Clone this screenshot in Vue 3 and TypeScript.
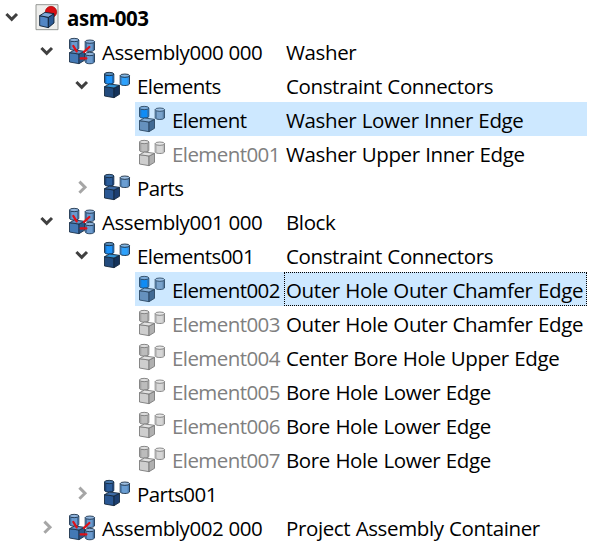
<script setup lang="ts">
type Kind = 'document' | 'assembly' | 'elements' | 'parts' | 'element' | 'hidden'

interface Row {
  level: number
  kind: Kind
  name: string
  label?: string
  arrow?: 'open' | 'closed'
  selected?: boolean
  focused?: boolean
}

const rows: Row[] = [
  { level: 0, kind: 'document', name: 'asm-003', arrow: 'open' },
  { level: 1, kind: 'assembly', name: 'Assembly000 000', label: 'Washer', arrow: 'open' },
  { level: 2, kind: 'elements', name: 'Elements', label: 'Constraint Connectors', arrow: 'open' },
  { level: 3, kind: 'element', name: 'Element', label: 'Washer Lower Inner Edge', selected: true },
  { level: 3, kind: 'hidden', name: 'Element001', label: 'Washer Upper Inner Edge' },
  { level: 2, kind: 'parts', name: 'Parts', arrow: 'closed' },
  { level: 1, kind: 'assembly', name: 'Assembly001 000', label: 'Block', arrow: 'open' },
  { level: 2, kind: 'elements', name: 'Elements001', label: 'Constraint Connectors', arrow: 'open' },
  { level: 3, kind: 'element', name: 'Element002', label: 'Outer Hole Outer Chamfer Edge', selected: true, focused: true },
  { level: 3, kind: 'hidden', name: 'Element003', label: 'Outer Hole Outer Chamfer Edge' },
  { level: 3, kind: 'hidden', name: 'Element004', label: 'Center Bore Hole Upper Edge' },
  { level: 3, kind: 'hidden', name: 'Element005', label: 'Bore Hole Lower Edge' },
  { level: 3, kind: 'hidden', name: 'Element006', label: 'Bore Hole Lower Edge' },
  { level: 3, kind: 'hidden', name: 'Element007', label: 'Bore Hole Lower Edge' },
  { level: 2, kind: 'parts', name: 'Parts001', arrow: 'closed' },
  { level: 1, kind: 'assembly', name: 'Assembly002 000', label: 'Project Assembly Container', arrow: 'closed' },
]

interface Palette { line: string; side: string; edge: string; top: string; cube: string; cubeSide: string; cubeTop: string; left: string; leftEdge: string; leftTop: string }

const palettes: Record<Kind, Palette> = {
  document: { line: '#0b1c30', side: '#5d90c8', edge: '#3465a4', top: '#8fb6df', cube: '#5286c4', cubeSide: '#2c5a94', cubeTop: '#7ea9d8', left: '#5d90c8', leftEdge: '#3465a4', leftTop: '#8fb6df' },
  assembly: { line: '#1a2f48', side: '#6b9ace', edge: '#4470a0', top: '#8fb3dc', cube: '#4379b5', cubeSide: '#2b578a', cubeTop: '#5f8fc4', left: '#6b9ace', leftEdge: '#4470a0', leftTop: '#8fb3dc' },
  elements: { line: '#14263a', side: '#2ea2fc', edge: '#3f87cc', top: '#7fb4e2', cube: '#234b7d', cubeSide: '#15335a', cubeTop: '#3294d8', left: '#1c93fb', leftEdge: '#1d69b5', leftTop: '#5588b5' },
  parts: { line: '#14263a', side: '#6b9ed2', edge: '#4f81b4', top: '#9dbfe3', cube: '#2a5793', cubeSide: '#1c3e70', cubeTop: '#3d6ba6', left: '#2b5d9b', leftEdge: '#1d4174', leftTop: '#4475ab' },
  element: { line: '#28445f', side: '#7aa3cc', edge: '#587fa6', top: '#9cc0e4', cube: '#6591bd', cubeSide: '#416a94', cubeTop: '#87afd6', left: '#108cf5', leftEdge: '#2a78c0', leftTop: '#78aada' },
  hidden: { line: '#777777', side: '#d6d6d6', edge: '#bdbdbd', top: '#e7e7e7', cube: '#cecece', cubeSide: '#b0b0b0', cubeTop: '#e2e2e2', left: '#bcbcbc', leftEdge: '#a3a3a3', leftTop: '#dcdcdc' },
}
</script>

<template>
  <main class="tree" role="tree">
    <div v-for="row in rows" :key="row.name" class="row" :class="['level-' + row.level, row.kind, { selected: row.selected }]" role="treeitem">
      <div class="gutter">
        <svg v-if="row.arrow" class="arrow" :class="row.arrow" viewBox="0 0 16 16">
          <path :d="row.arrow === 'open' ? 'M2.4 5 L7.7 10.300 L13 5' : 'M5.4 2.6 L11 8.200 L5.4 13.800'" />
        </svg>
      </div>
      <div class="item">
        <svg class="icon" viewBox="0 0 84 84" :stroke="palettes[row.kind].line" stroke-width="2.6" stroke-linejoin="round">
          <template v-if="row.kind === 'document'">
            <rect x="9" y="5" width="66" height="75" fill="#eeeeec" stroke="#888a85" />
            <circle cx="54" cy="27" r="17" fill="#d80e13" stroke="#a40000" stroke-width="2" />
            <path d="M20 38 L46 43 V74 L20 68Z" :fill="palettes.document.cube" />
            <path d="M46 43 L63 32 V60 L46 74Z" :fill="palettes.document.cubeSide" />
            <path d="M20 38 L36 28 L63 32 L46 43Z" :fill="palettes.document.cubeTop" />
          </template>
          <template v-else>
            <path d="M4.500 9 V35 C8 41 29 41 32.500 35 V9Z" :fill="palettes[row.kind].left" />
            <path d="M8 13 V36 M29 13 V36" :stroke="palettes[row.kind].leftEdge" stroke-width="4" />
            <ellipse cx="18.500" cy="9" rx="14" ry="5" :fill="palettes[row.kind].leftTop" />
            <path d="M51.500 14 V39 C55 45 76 45 79.500 39 V14Z" :fill="palettes[row.kind].side" />
            <path d="M55 18 V40 M76 18 V40" :stroke="palettes[row.kind].edge" stroke-width="4" />
            <ellipse cx="65.500" cy="14" rx="14" ry="5" :fill="palettes[row.kind].top" />
            <path d="M4.500 47 L33 51 V80 L4.500 75Z" :fill="palettes[row.kind].cube" />
            <path d="M33 51 L49.500 43 V70 L33 80Z" :fill="palettes[row.kind].cubeSide" />
            <path d="M4.500 47 L20 39 L49.500 43 L33 51Z" :fill="palettes[row.kind].cubeTop" />
            <template v-if="row.kind === 'assembly'">
              <path d="M51.500 51 V75 C55 82 76 82 79.500 75 V51Z" :fill="palettes.assembly.side" />
              <path d="M55 55 V77 M76 55 V77" :stroke="palettes.assembly.edge" stroke-width="4" />
              <ellipse cx="65.500" cy="51" rx="14" ry="5" :fill="palettes.assembly.top" />
              <path d="M16 27 L26 43 M64 30 L48 45 M38 64 H55" fill="none" stroke="#df1118" stroke-width="7" stroke-linecap="round" />
            </template>
          </template>
        </svg>
        <span class="name">{{ row.name }}</span>
      </div>
      <div v-if="row.label" class="label" :class="{ focused: row.focused }">{{ row.label }}</div>
    </div>
  </main>
</template>

<style>
body {
  background: #fff;
}
</style>

<style scoped>
.tree {
  width: 592px;
  height: 558px;
  overflow: hidden;
  background: #fff;
  color: #000;
  font-family: "Open Sans", "Noto Sans", sans-serif;
  font-size: 20.5px;
  line-height: 34px;
  letter-spacing: -0.38px;
  word-spacing: 0.5px;
  white-space: nowrap;
}
.row {
  display: grid;
  grid-template-columns: 30px 254px 303px;
  height: 34px;
}
.level-1 { grid-template-columns: 65px 219px 303px; }
.level-2 { grid-template-columns: 100px 184px 303px; }
.level-3 { grid-template-columns: 135px 149px 303px; }
.gutter {
  display: flex;
  align-items: center;
  justify-content: flex-end;
  padding-right: 10px;
}
.arrow {
  width: 16px;
  height: 16px;
  fill: none;
  stroke: #404040;
  stroke-width: 3;
}
.arrow.closed { stroke: #a6a6a6; }
.item {
  display: flex;
  align-items: center;
  gap: 6px;
  padding-left: 3px;
  min-width: 0;
}
.icon {
  flex: none;
  width: 28px;
  height: 28px;
}
.name {
  padding-top: 2px;
  line-height: 32px;
  letter-spacing: -0.45px;
}
.level-2 .name,
.level-3 .name { letter-spacing: -0.57px; }
.label {
  box-sizing: border-box;
  height: 34px;
  padding: 2px 0 0 2px;
  line-height: 32px;
}
.selected .item,
.selected .label { background: #cde8ff; }
.label.focused {
  border: 1px dotted #000;
  padding: 1px 0 0 1px;
}
.document .name {
  font-weight: 700;
  letter-spacing: -0.4px;
}
.hidden .name { color: #808080; }
</style>
